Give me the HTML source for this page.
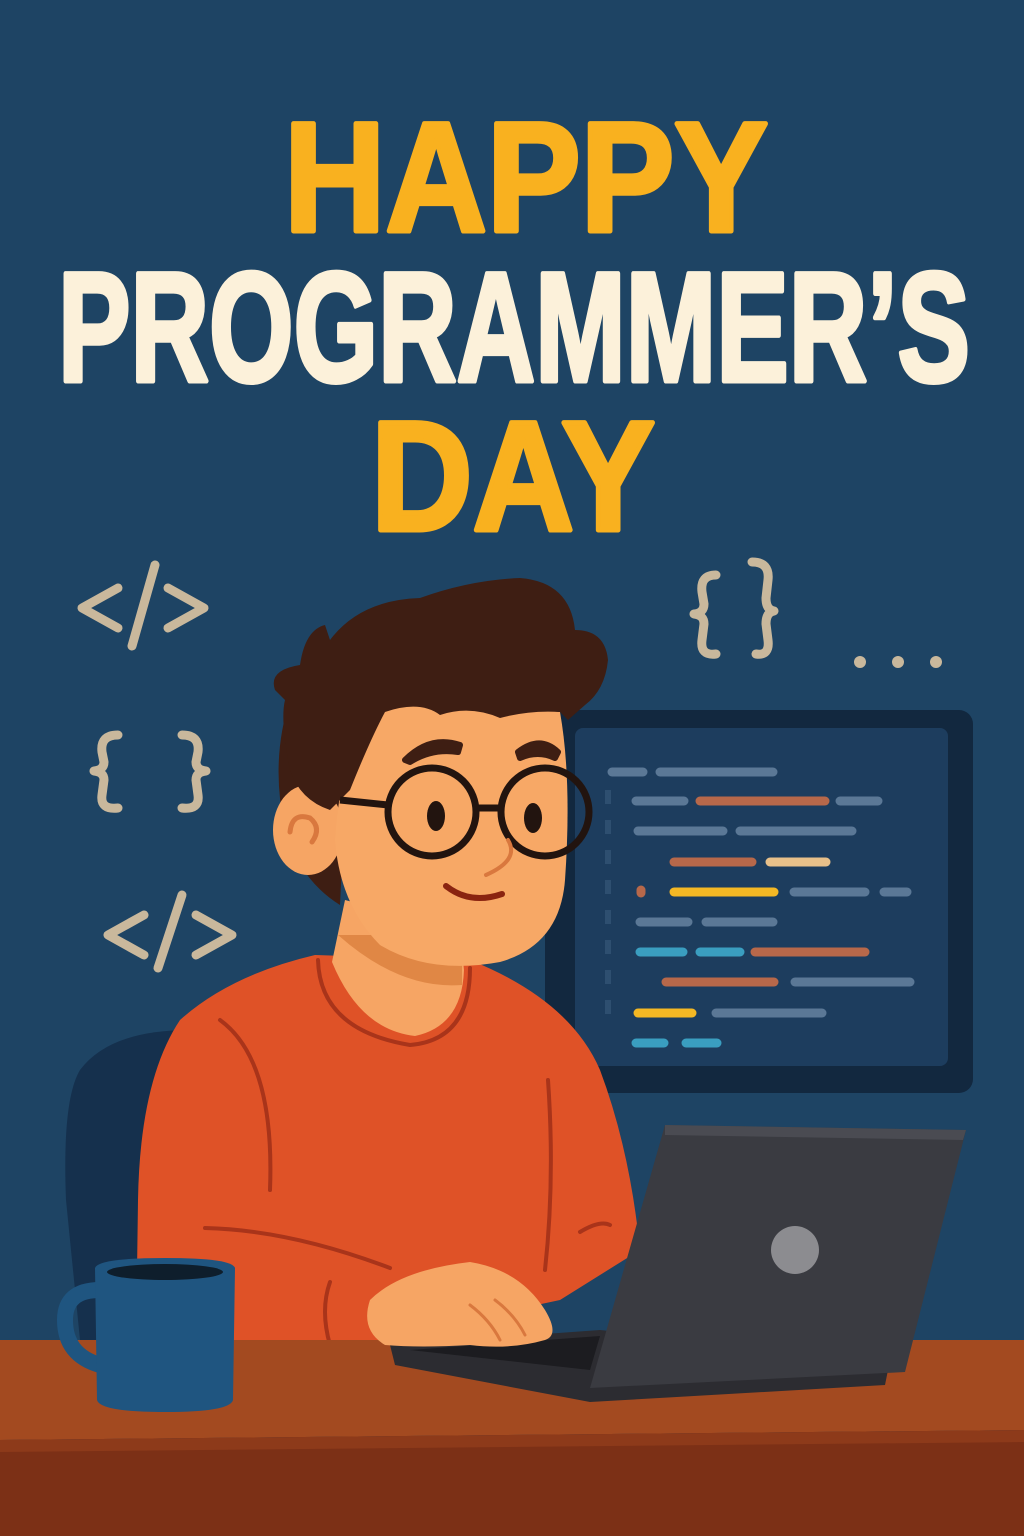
<!DOCTYPE html>
<html><head><meta charset="utf-8"><style>
html,body{margin:0;padding:0;background:#1e4464;}
svg{display:block}
text{font-family:"Liberation Sans",sans-serif;font-weight:bold}
</style></head><body>
<svg width="1024" height="1536" viewBox="0 0 1024 1536" xmlns="http://www.w3.org/2000/svg">
<rect width="1024" height="1536" fill="#1e4464"/>
<!-- Title -->
<text x="284" y="231" font-size="156" fill="#f9b11f" stroke="#f9b11f" stroke-width="5" stroke-linejoin="round" textLength="484" lengthAdjust="spacingAndGlyphs">HAPPY</text>
<text x="58" y="381" font-size="156" fill="#fcf1da" stroke="#fcf1da" stroke-width="5" stroke-linejoin="round" textLength="912" lengthAdjust="spacingAndGlyphs">PROGRAMMER’S</text>
<text x="371" y="530" font-size="156" fill="#f9b11f" stroke="#f9b11f" stroke-width="5" stroke-linejoin="round" textLength="284" lengthAdjust="spacingAndGlyphs">DAY</text>
<!-- symbols -->
<g fill="none" stroke="#c9b89c" stroke-width="9" stroke-linecap="round" stroke-linejoin="round">
<path d="M118 588 L82 608 L118 628"/><path d="M155 565 L132 646"/><path d="M168 588 L204 608 L168 628"/>
<path d="M144 915 L108 935 L144 955"/><path d="M182 895 L158 968"/><path d="M196 915 L232 935 L196 955"/>
<path d="M118 735 Q100 735 102 752 L104 762 Q104 770 94 771 Q104 772 104 780 L102 795 Q100 810 118 808"/>
<path d="M182 735 Q200 735 198 752 L196 762 Q196 770 206 771 Q196 772 196 780 L198 795 Q200 810 182 808"/>
<path d="M716 575 Q700 575 702 592 L704 604 Q704 613 694 614 Q704 615 704 624 L702 640 Q700 656 716 654"/>
<path d="M752 562 Q770 562 768 580 L766 598 Q766 610 774 611 Q766 612 766 624 L768 640 Q770 656 756 654"/>
</g>
<g fill="#c9b89c"><circle cx="860" cy="662" r="6"/><circle cx="898" cy="662" r="6"/><circle cx="936" cy="662" r="6"/></g>
<!-- monitor -->
<rect x="545" y="710" width="428" height="383" rx="14" fill="#12283f"/>
<rect x="575" y="728" width="373" height="338" rx="8" fill="#1d3d5e"/>
<g stroke-linecap="round" stroke-width="9">
<path d="M612 772 H643 M660 772 H773" stroke="#5b7896"/>
<path d="M636 801 H684 M840 801 H878" stroke="#5b7896"/><path d="M700 801 H825" stroke="#b7684a"/>
<path d="M638 831 H723 M740 831 H852" stroke="#5b7896"/>
<path d="M674 862 H752" stroke="#b7684a"/><path d="M770 862 H826" stroke="#e7c08a"/>
<path d="M674 892 H774" stroke="#f4b824"/><path d="M794 892 H865 M884 892 H907" stroke="#5b7896"/><path d="M641 890 V893" stroke="#b7684a"/>
<path d="M640 922 H688 M706 922 H773" stroke="#5b7896"/>
<path d="M640 952 H683 M700 952 H740" stroke="#3a9ec0"/><path d="M755 952 H865" stroke="#b7684a"/>
<path d="M666 982 H774" stroke="#b7684a"/><path d="M795 982 H910" stroke="#5b7896"/>
<path d="M638 1013 H692" stroke="#f4b824"/><path d="M716 1013 H822" stroke="#5b7896"/>
<path d="M636 1043 H664 M686 1043 H717" stroke="#3a9ec0"/>
</g>
<path d="M608 790 V1030" stroke="#2e4f70" stroke-width="6" stroke-dasharray="14 16"/>
<!-- chair -->
<path d="M190 1030 Q110 1030 80 1070 Q62 1100 66 1200 L80 1340 L180 1340 Z" fill="#15304d"/>
<!-- shirt -->
<path d="M315 955 Q230 975 180 1020 Q140 1080 138 1200 L136 1345 L400 1345 L420 1330 L560 1300 L640 1250 Q630 1150 600 1070 Q570 1000 470 960 Z" fill="#df5227"/>
<g fill="none" stroke="#a9341a" stroke-width="4" stroke-linecap="round">
<path d="M318 960 Q320 1030 410 1045 Q470 1040 470 968"/>
<path d="M220 1020 Q275 1060 270 1190"/>
<path d="M548 1080 Q555 1180 545 1270"/>
<path d="M205 1228 Q290 1230 390 1268"/>
<path d="M330 1282 Q320 1310 330 1345"/>
<path d="M580 1232 Q600 1220 610 1225"/>
</g>
<!-- neck -->
<path d="M345 900 L332 962 Q360 1030 415 1036 Q462 1026 464 970 L460 930 Z" fill="#f6a564"/>
<path d="M338 935 Q400 990 462 985 L462 935 Z" fill="#e08745"/>
<!-- hair back -->
<path d="M290 700 Q270 760 285 830 Q300 880 340 905 L350 700 Z" fill="#3e1e13"/>
<!-- ear -->
<ellipse cx="308" cy="830" rx="35" ry="45" fill="#f6a564"/>
<path d="M290 832 Q292 812 310 818 Q322 828 312 842" fill="none" stroke="#d9783e" stroke-width="5" stroke-linecap="round"/>
<!-- face -->
<path d="M370 705 Q455 700 560 712 Q572 780 565 880 Q560 945 500 962 Q430 975 380 945 Q340 905 335 840 Q340 760 370 705 Z" fill="#f7a866"/>
<!-- hair -->
<path d="M275 690 Q268 670 300 665 Q305 630 325 625 L330 640 Q360 600 420 598 Q470 580 520 578 Q570 582 575 630 Q605 630 608 660 Q605 690 585 705 L568 720 L560 712 Q530 710 500 718 Q470 705 440 715 Q420 700 385 712 Q370 740 350 790 L330 810 Q300 800 290 770 Q280 720 285 700 Z" fill="#3e1e13"/>
<!-- brows -->
<path d="M405 760 Q430 735 460 745 L458 752 Q432 748 410 762 Z" fill="#3e1e13" stroke="#3e1e13" stroke-width="6" stroke-linejoin="round"/>
<path d="M518 752 Q540 735 558 752 L555 758 Q538 750 520 758 Z" fill="#3e1e13" stroke="#3e1e13" stroke-width="6" stroke-linejoin="round"/>
<!-- glasses -->
<g fill="none" stroke="#22140f" stroke-width="7">
<circle cx="432" cy="812" r="44"/><circle cx="545" cy="812" r="44"/>
<path d="M476 808 H502"/><path d="M388 805 L340 800"/>
</g>
<ellipse cx="436" cy="816" rx="9" ry="15" fill="#22140f"/>
<ellipse cx="533" cy="818" rx="9" ry="15" fill="#22140f"/>
<path d="M508 840 Q520 860 486 875" fill="none" stroke="#d9783e" stroke-width="4" stroke-linecap="round"/>
<path d="M446 886 Q470 905 502 894" fill="none" stroke="#8a2410" stroke-width="6" stroke-linecap="round"/>
<!-- desk -->
<path d="M0 1340 L1024 1340 L1024 1430 L0 1440 Z" fill="#a34a20"/>
<path d="M0 1440 L1024 1430 L1024 1536 L0 1536 Z" fill="#7c3016"/>
<path d="M0 1440 L1024 1430 L1024 1442 L0 1452 Z" fill="#8d3a1a"/>
<!-- laptop -->
<path d="M390 1345 L600 1330 L890 1360 L885 1385 L590 1402 L395 1365 Z" fill="#2c2c31"/>
<path d="M410 1350 L600 1336 L590 1370 Z" fill="#1c1c20"/>
<path d="M665 1125 L966 1130 L905 1372 L590 1388 Z" fill="#3a3b41"/>
<path d="M665 1125 L966 1130 L963 1140 L665 1135 Z" fill="#4a4b52"/>
<circle cx="795" cy="1250" r="24" fill="#8c8c90"/>
<!-- hand -->
<path d="M370 1300 Q400 1270 470 1262 Q520 1270 545 1310 Q560 1335 545 1340 Q510 1350 470 1345 Q420 1348 385 1345 Q360 1330 370 1300 Z" fill="#f6a564"/>
<g fill="none" stroke="#d9783e" stroke-width="3" stroke-linecap="round"><path d="M470 1305 Q490 1320 500 1340"/><path d="M495 1300 Q515 1315 525 1335"/></g>
<!-- mug -->
<path d="M100 1290 Q65 1290 65 1320 Q65 1355 100 1365" fill="none" stroke="#1f5580" stroke-width="16"/>
<path d="M95 1268 Q98 1258 165 1258 Q232 1258 235 1268 L233 1400 Q230 1412 165 1412 Q100 1412 97 1400 Z" fill="#1f5580"/>
<ellipse cx="165" cy="1272" rx="58" ry="8" fill="#0e1e2c"/>
</svg>
</body></html>
